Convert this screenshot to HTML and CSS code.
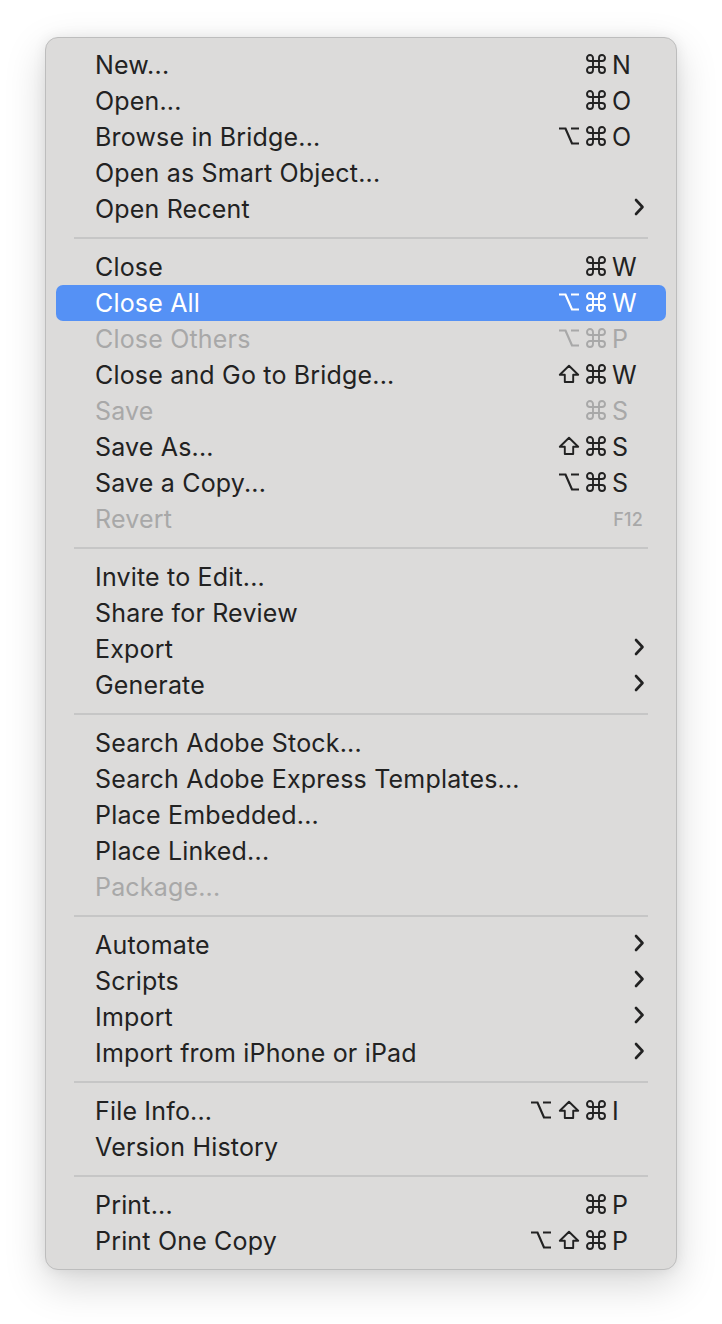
FILE: index.html
```html
<!DOCTYPE html>
<html>
<head>
<meta charset="utf-8">
<link rel="stylesheet" href="styles.css">
</head>
<body>
<svg class="defs" width="0" height="0" aria-hidden="true">
  <symbol id="cmd" viewBox="0 0 20 20"><path d="M7 7 V4 a3 3 0 1 0 -3 3 H16 a3 3 0 1 0 -3 -3 V16 a3 3 0 1 0 3 -3 H4 a3 3 0 1 0 3 3 Z" fill="none" stroke="currentColor" stroke-width="1.9"/></symbol>
  <symbol id="opt" viewBox="0 0 22 20"><path d="M1 2.5 H7.5 L14 17.5 H21 M13 2.5 H21" fill="none" stroke="currentColor" stroke-width="2.2"/></symbol>
  <symbol id="shift" viewBox="0 0 22 20"><path d="M11 1.8 L1.8 10.8 H6.8 V18 H15.2 V10.8 H20.2 Z" fill="none" stroke="currentColor" stroke-width="1.9" stroke-linejoin="round"/></symbol>
  <symbol id="chev" viewBox="0 0 11 18"><path d="M2 2 L8.5 9 L2 16" fill="none" stroke="currentColor" stroke-width="2.6" stroke-linecap="round" stroke-linejoin="round"/></symbol>
</svg>
<div class="menu">
  <div class="row"><span class="label">New...</span><span class="mods"><svg class="g-cmd"><use href="#cmd"/></svg></span><span class="key">N</span></div>
  <div class="row"><span class="label">Open...</span><span class="mods"><svg class="g-cmd"><use href="#cmd"/></svg></span><span class="key">O</span></div>
  <div class="row"><span class="label">Browse in Bridge...</span><span class="mods"><svg class="g-opt"><use href="#opt"/></svg><svg class="g-cmd"><use href="#cmd"/></svg></span><span class="key">O</span></div>
  <div class="row"><span class="label">Open as Smart Object...</span></div>
  <div class="row"><span class="label">Open Recent</span><svg class="chev"><use href="#chev"/></svg></div>
  <div class="sep"></div>
  <div class="row"><span class="label">Close</span><span class="mods"><svg class="g-cmd"><use href="#cmd"/></svg></span><span class="key">W</span></div>
  <div class="row active"><span class="label">Close All</span><span class="mods"><svg class="g-opt"><use href="#opt"/></svg><svg class="g-cmd"><use href="#cmd"/></svg></span><span class="key">W</span></div>
  <div class="row disabled"><span class="label">Close Others</span><span class="mods"><svg class="g-opt"><use href="#opt"/></svg><svg class="g-cmd"><use href="#cmd"/></svg></span><span class="key">P</span></div>
  <div class="row"><span class="label">Close and Go to Bridge...</span><span class="mods"><svg class="g-shift"><use href="#shift"/></svg><svg class="g-cmd"><use href="#cmd"/></svg></span><span class="key">W</span></div>
  <div class="row disabled"><span class="label">Save</span><span class="mods"><svg class="g-cmd"><use href="#cmd"/></svg></span><span class="key">S</span></div>
  <div class="row"><span class="label">Save As...</span><span class="mods"><svg class="g-shift"><use href="#shift"/></svg><svg class="g-cmd"><use href="#cmd"/></svg></span><span class="key">S</span></div>
  <div class="row"><span class="label">Save a Copy...</span><span class="mods"><svg class="g-opt"><use href="#opt"/></svg><svg class="g-cmd"><use href="#cmd"/></svg></span><span class="key">S</span></div>
  <div class="row disabled"><span class="label">Revert</span><span class="fkey">F12</span></div>
  <div class="sep"></div>
  <div class="row"><span class="label">Invite to Edit...</span></div>
  <div class="row"><span class="label">Share for Review</span></div>
  <div class="row"><span class="label">Export</span><svg class="chev"><use href="#chev"/></svg></div>
  <div class="row"><span class="label">Generate</span><svg class="chev"><use href="#chev"/></svg></div>
  <div class="sep"></div>
  <div class="row"><span class="label">Search Adobe Stock...</span></div>
  <div class="row"><span class="label">Search Adobe Express Templates...</span></div>
  <div class="row"><span class="label">Place Embedded...</span></div>
  <div class="row"><span class="label">Place Linked...</span></div>
  <div class="row disabled"><span class="label">Package...</span></div>
  <div class="sep"></div>
  <div class="row"><span class="label">Automate</span><svg class="chev"><use href="#chev"/></svg></div>
  <div class="row"><span class="label">Scripts</span><svg class="chev"><use href="#chev"/></svg></div>
  <div class="row"><span class="label">Import</span><svg class="chev"><use href="#chev"/></svg></div>
  <div class="row"><span class="label">Import from iPhone or iPad</span><svg class="chev"><use href="#chev"/></svg></div>
  <div class="sep"></div>
  <div class="row"><span class="label">File Info...</span><span class="mods"><svg class="g-opt"><use href="#opt"/></svg><svg class="g-shift"><use href="#shift"/></svg><svg class="g-cmd"><use href="#cmd"/></svg></span><span class="key">I</span></div>
  <div class="row"><span class="label">Version History</span></div>
  <div class="sep"></div>
  <div class="row"><span class="label">Print...</span><span class="mods"><svg class="g-cmd"><use href="#cmd"/></svg></span><span class="key">P</span></div>
  <div class="row"><span class="label">Print One Copy</span><span class="mods"><svg class="g-opt"><use href="#opt"/></svg><svg class="g-shift"><use href="#shift"/></svg><svg class="g-cmd"><use href="#cmd"/></svg></span><span class="key">P</span></div>
</div>
</body>
</html>
```

FILE: styles.css
```css
html, body {
  margin: 0;
  padding: 0;
  background: #ffffff;
}

.defs {
  position: absolute;
  width: 0;
  height: 0;
  overflow: hidden;
}

body {
  padding: 37px 0 54px 45px;
  font-family: "Inter", "Noto Sans", "Liberation Sans", sans-serif;
  color: #222222;
}

.menu {
  box-sizing: border-box;
  width: 632px;
  padding: 9px 10px 10px 10px;
  background: #dcdbda;
  border: 1px solid #bdbdbd;
  border-radius: 13px;
  box-shadow: 0 14px 40px rgba(0, 0, 0, 0.17), 0 0 14px rgba(0, 0, 0, 0.07);
}

.row {
  display: grid;
  grid-template-columns: 1fr auto 22px 11px;
  align-items: center;
  height: 36px;
  padding: 0 21px 0 39px;
  border-radius: 7px;
  font-size: 25px;
  letter-spacing: 0.18px;
}

.label {
  grid-column: 1;
  white-space: nowrap;
  line-height: 36px;
}

.mods {
  grid-column: 2;
  display: flex;
  align-items: center;
  gap: 6px;
  margin-right: 6px;
}

.g-cmd {
  width: 20px;
  height: 20px;
  margin-top: -2px;
}

.g-opt,
.g-shift {
  width: 22px;
  height: 20px;
  margin-top: -2px;
}

.key {
  grid-column: 3;
  line-height: 36px;
}

.fkey {
  grid-column: 3 / 5;
  justify-self: end;
  margin-right: 2px;
  font-size: 18px;
  font-weight: 500;
  letter-spacing: 0.2px;
}

.chev {
  grid-column: 4;
  width: 11px;
  height: 18px;
  margin-top: -5px;
}

.row.active {
  background: #5591f5;
  color: #ffffff;
}

.row.disabled {
  color: #a8a8a8;
}

.sep {
  height: 2px;
  margin: 10px 18px 10px 18px;
  background: #c6c6c6;
}
```
